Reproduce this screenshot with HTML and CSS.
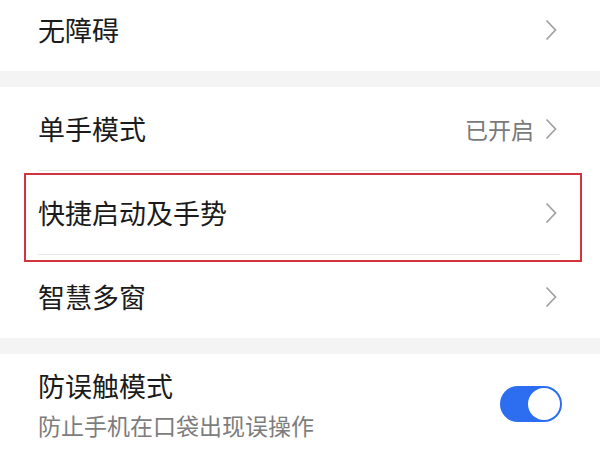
FILE: index.html
```html
<!DOCTYPE html>
<html lang="zh-CN">
<head>
    <meta charset="UTF-8">
    <meta name="viewport" content="width=device-width, initial-scale=1.0">
    <title>设置</title>
    <link rel="stylesheet" href="styles.css">
</head>
<body>
    <div class="settings">
        <div class="group first">
            <div class="row">
                <span class="title">无障碍</span>
                <svg class="chevron" width="12" height="22" viewBox="0 0 12 22"><polyline points="1.5,1.5 10.5,11 1.5,20.5"/></svg>
            </div>
        </div>

        <div class="gap"></div>

        <div class="group">
            <div class="row">
                <span class="title">单手模式</span>
                <span class="right">
                    <span class="value">已开启</span>
                    <svg class="chevron" width="12" height="22" viewBox="0 0 12 22"><polyline points="1.5,1.5 10.5,11 1.5,20.5"/></svg>
                </span>
            </div>
            <div class="row">
                <span class="title">快捷启动及手势</span>
                <svg class="chevron" width="12" height="22" viewBox="0 0 12 22"><polyline points="1.5,1.5 10.5,11 1.5,20.5"/></svg>
                <div class="highlight"></div>
            </div>
            <div class="row">
                <span class="title">智慧多窗</span>
                <svg class="chevron" width="12" height="22" viewBox="0 0 12 22"><polyline points="1.5,1.5 10.5,11 1.5,20.5"/></svg>
            </div>
        </div>

        <div class="gap"></div>

        <div class="group">
            <div class="row tall">
                <div class="text">
                    <div class="title">防误触模式</div>
                    <div class="sub">防止手机在口袋出现误操作</div>
                </div>
                <div class="switch on"><div class="knob"></div></div>
            </div>
        </div>
    </div>
</body>
</html>
```

FILE: styles.css
```css
body {
    margin: 0;
    background-color: #ffffff;
    font-family: "Noto Sans CJK SC", "Noto Sans", sans-serif;
    color: #1b1b1b;
    overflow: hidden;
}
.settings {
    width: 600px;
}
.group {
    background-color: #ffffff;
}
.group.first {
    margin-top: -12px;
}
.gap {
    height: 16px;
    background-color: #f4f4f4;
}
.row {
    position: relative;
    display: flex;
    align-items: center;
    justify-content: space-between;
    height: 83px;
    margin: 0 40px 0 38px;
    border-bottom: 1px solid #e9e9e9;
}
.group .row:last-child {
    border-bottom: none;
}
.title {
    font-size: 27px;
    line-height: 32px;
}
.right {
    display: flex;
    align-items: center;
    gap: 11px;
}
.value {
    font-size: 23px;
    color: #7a7a7a;
}
.chevron {
    margin-right: 3px;
}
.chevron polyline {
    fill: none;
    stroke: #a3a3a3;
    stroke-width: 1.8;
}
.highlight {
    position: absolute;
    top: 2px;
    left: -14px;
    right: -22px;
    height: 85px;
    border: 2px solid #d3333d;
}
.row.tall {
    height: 110px;
    align-items: flex-start;
}
.text {
    padding-top: 16px;
}
.sub {
    margin-top: 8px;
    font-size: 23px;
    line-height: 30px;
    color: #7d7d7d;
}
.switch {
    margin-top: 32px;
    margin-right: -2px;
    width: 62px;
    height: 36px;
    border-radius: 18px;
    background-color: #2d6df0;
    position: relative;
}
.switch .knob {
    position: absolute;
    top: 2px;
    right: 2px;
    width: 32px;
    height: 32px;
    border-radius: 50%;
    background-color: #ffffff;
}
```
